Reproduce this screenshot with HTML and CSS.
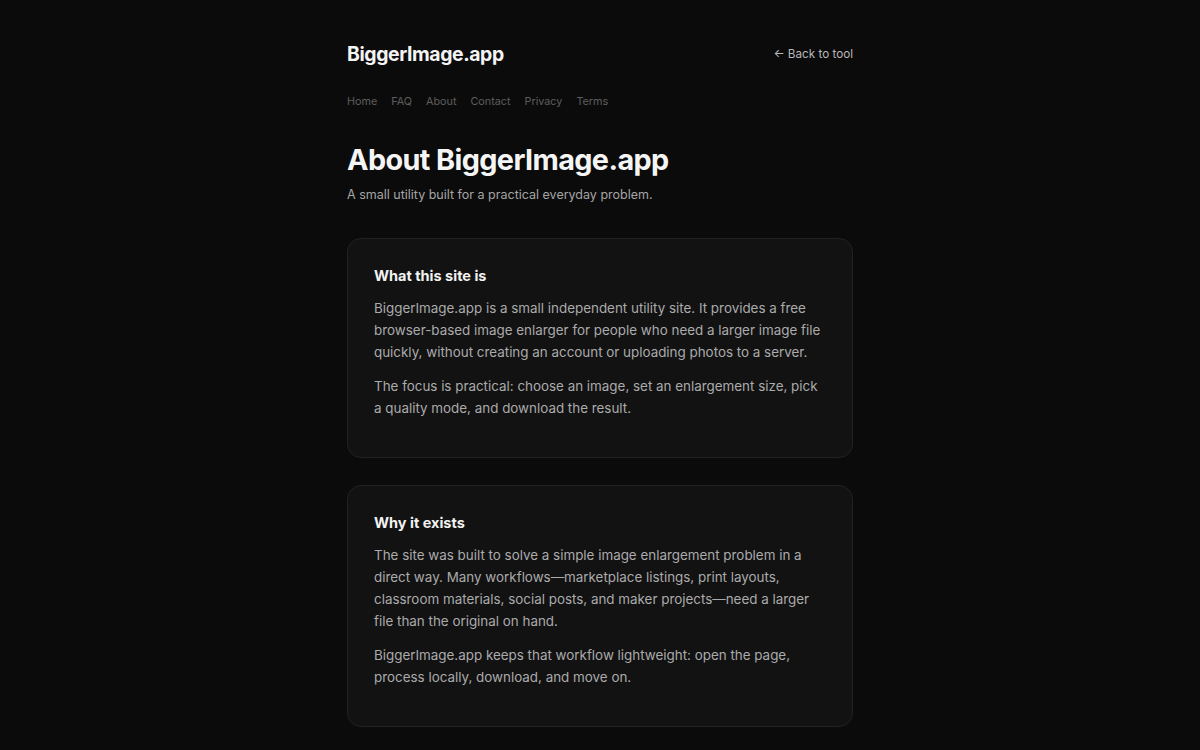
FILE: index.html
```html
<!DOCTYPE html>
<html lang="en">
<head>
<meta charset="utf-8">
<title>About BiggerImage.app</title>
<link rel="stylesheet" href="styles.css">
</head>
<body>
<div class="page">
  <header class="header">
    <a class="logo" href="#">BiggerImage.app</a>
    <a class="back" href="#">← Back to tool</a>
  </header>
  <nav class="nav">
    <a href="#">Home</a>
    <a href="#">FAQ</a>
    <a href="#">About</a>
    <a href="#">Contact</a>
    <a href="#">Privacy</a>
    <a href="#">Terms</a>
  </nav>
  <h1 class="title">About BiggerImage.app</h1>
  <p class="subtitle">A small utility built for a practical everyday problem.</p>

  <section class="card">
    <h2>What this site is</h2>
    <p>BiggerImage.app is a small independent utility site. It provides a free browser-based image enlarger for people who need a larger image file quickly, without creating an account or uploading photos to a server.</p>
    <p>The focus is practical: choose an image, set an enlargement size, pick a quality mode, and download the result.</p>
  </section>

  <section class="card">
    <h2>Why it exists</h2>
    <p>The site was built to solve a simple image enlargement problem in a direct way. Many workflows—marketplace listings, print layouts, classroom materials, social posts, and maker projects—need a larger file than the original on hand.</p>
    <p>BiggerImage.app keeps that workflow lightweight: open the page, process locally, download, and move on.</p>
  </section>
</div>
</body>
</html>
```
FILE: styles.css
```css
html, body {
  margin: 0;
  padding: 0;
  background: #0b0b0b;
  color: #a9a9a9;
  font-family: Inter, "Noto Sans", sans-serif;
}
a { text-decoration: none; color: inherit; }
.page {
  width: 506px;
  margin: 0 auto;
  padding: 40px 0 40px;
}
.header {
  display: flex;
  justify-content: space-between;
  align-items: center;
  height: 28px;
}
.logo {
  font-size: 19.4px;
  font-weight: 700;
  color: #f4f4f4;
  letter-spacing: -0.4px;
  line-height: 28px;
}
.back {
  font-size: 11.7px;
  color: #b8b8b8;
}
.nav {
  display: flex;
  gap: 14px;
  margin-top: 26px;
  font-size: 10.8px;
  line-height: 16px;
}
.nav a { color: #5e5e5e; }
.title {
  margin: 32px 0 0;
  font-size: 28.8px;
  line-height: 36px;
  font-weight: 700;
  color: #f5f5f5;
  letter-spacing: -0.6px;
}
.subtitle {
  margin: 7px 0 0;
  font-size: 12.5px;
  line-height: 20px;
  color: #a5a5a5;
}
.card {
  margin-top: 33px;
  background: #121213;
  border: 1px solid #222224;
  border-radius: 14px;
  padding: 26px 26px 26px;
}
.card + .card { margin-top: 27px; }
.card h2 {
  margin: 0 0 10px;
  font-size: 14.5px;
  line-height: 22px;
  font-weight: 700;
  color: #f2f2f2;
}
.card p {
  margin: 0 0 12px;
  font-size: 13.4px;
  line-height: 22px;
  color: #ababab;
}
```
